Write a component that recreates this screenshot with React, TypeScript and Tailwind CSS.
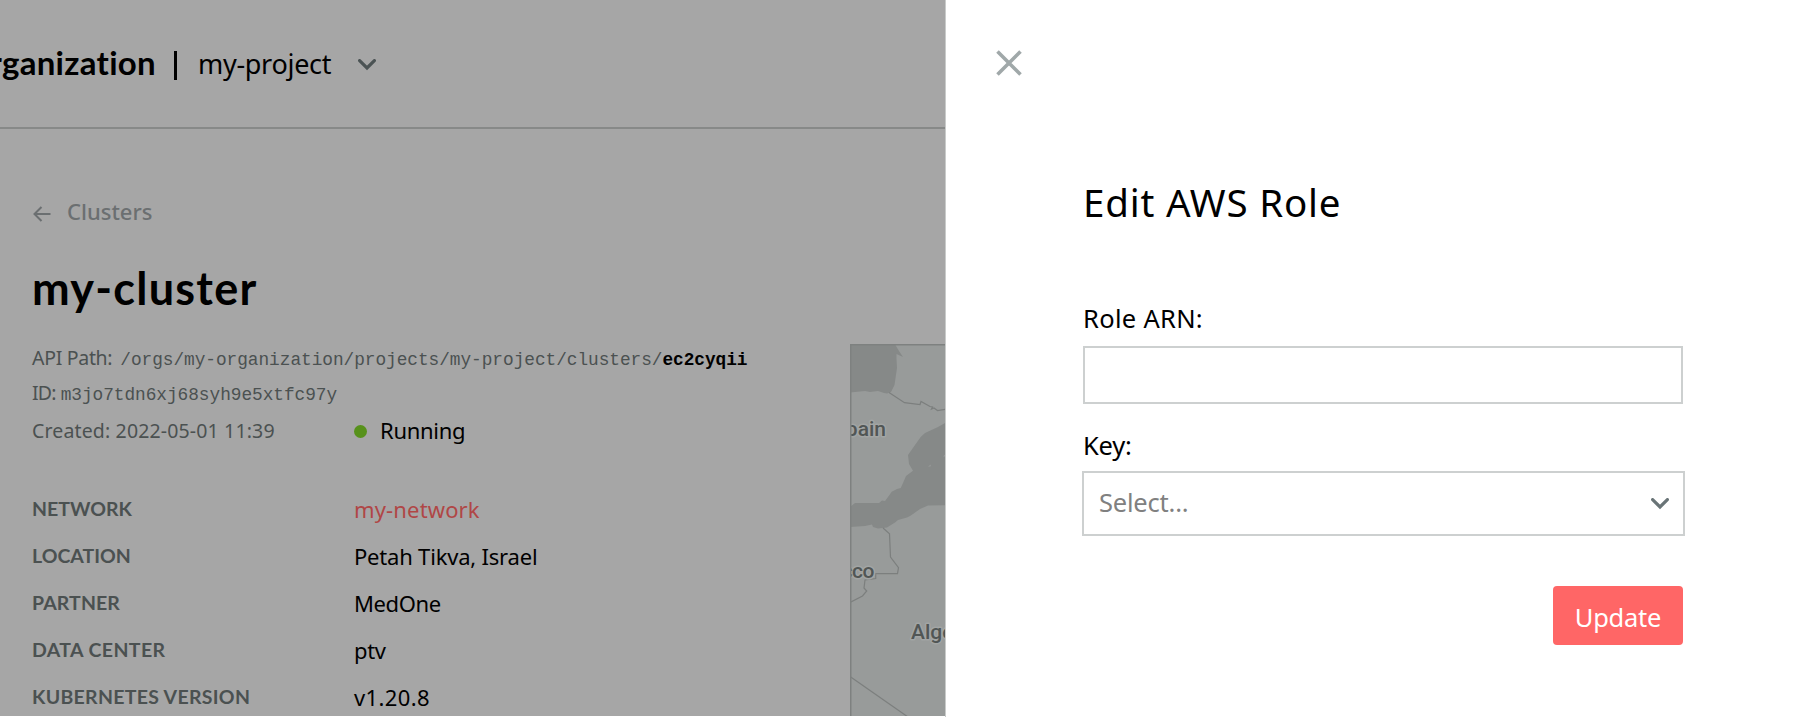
import React from 'react';

const details = [
  { label: 'NETWORK', value: 'my-network', link: true, tracking: 'tracking-normal', valueTracking: 'tracking-[0.15px]' },
  { label: 'LOCATION', value: 'Petah Tikva, Israel', tracking: 'tracking-normal', valueTracking: 'tracking-[-0.2px]' },
  { label: 'PARTNER', value: 'MedOne', tracking: 'tracking-[0.1px]', valueTracking: 'tracking-[-0.4px]' },
  { label: 'DATA CENTER', value: 'ptv', tracking: 'tracking-[0.4px]', valueTracking: 'tracking-[-0.3px]' },
  { label: 'KUBERNETES VERSION', value: 'v1.20.8', tracking: 'tracking-[0.3px]', valueTracking: 'tracking-[0.4px]' },
];

function Chevron({ className }: { className: string }) {
  return (
    <svg width="18" height="12" viewBox="0 0 18 12" fill="none" className={className}>
      <path d="M1.6 1.6 L9 9 L16.4 1.6" stroke="currentColor" strokeWidth="3.2" strokeLinecap="round" />
    </svg>
  );
}

function RegionMap() {
  return (
    <svg width="95" height="373" viewBox="0 0 95 373" className="block shrink-0">
      <rect width="95" height="373" fill="#989b9a" />
      <g fill="#868988">
        <path d="M0 0 H45 L46 2 L49 7 L53 13 L46.5 10 L46.5 15 L47 24 L44.5 41 L41 48 L37 49.5 L34 49 L28 47 L20 48 L15 47 L0 48.5 Z" />
        <path d="M95 79 L88 83 L75 89 L70.7 93 L65 101 L58 111 L59 120 L63 126.7 L56 132 L53 139 L50.7 144 L47 145 L41.7 147.7 L38 153 L35 157 L32 156.5 L29 159 L5 159 L0 163 V183 L15 182 L22 180.5 L23 183 L28 184.5 L37 183.5 L45 178.6 L48 176 L57 173.6 L60 172 L63 170 L70 165 L78 161.6 L95 161.3 Z" />
      </g>
      <path d="M78 122.5 L81 120.5 L80.5 122.5 Z M93 112.5 L95 110.5 V112.5 Z" fill="#989b9a" />
      <g fill="none" stroke="#7c7f7e" strokeWidth="1.2">
        <path d="M39 48.5 L54.5 58.7 L70 60.5 L71 57.5 L80 62.5 L82.5 63 L81.5 65 L84 64 L87.5 66.5 L95 65.3" />
        <path d="M33 184 L39.5 189.7 L40.5 213 L48.5 223.7 L47.5 229.7 H25.7 V234.5 L15 236 L14 244 L16.7 247 L12.5 252 L0 258.5" />
        <path d="M0 332.5 L58 373" />
      </g>
      <g
        fill="#515655"
        stroke="#a2a5a4"
        strokeWidth="3"
        strokeLinejoin="round"
        style={{ paintOrder: 'stroke' }}
        className="font-['Roboto',sans-serif] text-[21px] font-medium"
      >
        <text x="36" y="91.7" textAnchor="end">Spain</text>
        <text x="24" y="233.7" textAnchor="end" className="tracking-[-0.5px]">Morocco</text>
        <text x="61" y="294.7">Algeria</text>
      </g>
      <path d="M0.75 373 V0.75 H95" fill="none" stroke="#7e8180" strokeWidth="1.5" />
    </svg>
  );
}

export default function App() {
  return (
    <div className="flex h-[717px] w-[1820px] overflow-hidden bg-white font-['Noto_Sans',sans-serif] text-black">
      <div className="flex h-[716px] w-[945px] shrink-0 flex-col overflow-hidden bg-[#a6a6a6]">
        <header className="h-[129px] shrink-0 border-b-2 border-[#878988]">
          <div className="flex h-[124px] items-center whitespace-nowrap">
            <div className="flex w-[156px] justify-end overflow-hidden font-['Lato',sans-serif] text-[33px] leading-[60px] font-bold tracking-[0.3px]">
              <span>my-organization</span>
            </div>
            <span className="mt-[7px] ml-[18px] h-[29px] w-[3px] bg-black" />
            <span className="mt-[4px] ml-[21px] text-[27px] tracking-[-0.3px]">my-project</span>
            <Chevron className="mt-[6px] ml-[27px] text-[#4b5354]" />
          </div>
        </header>

        <div className="flex justify-between">
          <main className="w-[760px] pl-[32px] whitespace-nowrap">
            <div className="mt-[66px] flex h-8 items-center text-[22px] font-medium text-[#6b6f71]">
              <svg width="18" height="16" viewBox="0 0 18 16" fill="none" className="mt-[5px] mr-[16px] ml-px">
                <path d="M17.5 8 H2 M8.5 1 L1.5 8 L8.5 15" stroke="currentColor" strokeWidth="2" />
              </svg>
              <span>Clusters</span>
            </div>
            <h1 className="mt-[31px] font-['Lato',sans-serif] text-[45px] leading-[60px] font-bold tracking-[1.25px]">
              my-cluster
            </h1>

            <div className="mt-[23px] text-[19.5px] leading-[34px] text-[#4b5151]">
              <div className="flex h-[34px] items-baseline">
                <span className="tracking-[-0.3px]">API Path:</span>
                <span className="ml-2 font-['Liberation_Mono',monospace] text-[17.8px] tracking-[-0.04px]">
                  /orgs/my-organization/projects/my-project/clusters/
                </span>
                <b className="font-['Liberation_Mono',monospace] text-[17.8px] tracking-[-0.04px] text-black">ec2cyqii</b>
              </div>
              <div className="mt-px flex h-[34px] items-baseline">
                <span className="tracking-[-0.8px]">ID:</span>
                <span className="ml-[5px] font-['Liberation_Mono',monospace] text-[17.8px] tracking-[-0.04px]">
                  m3jo7tdn6xj68syh9e5xtfc97y
                </span>
              </div>
              <div className="mt-[4px] flex h-[34px]">
                <span className="w-[322px] tracking-[0.15px]">Created: 2022-05-01 11:39</span>
                <span className="-mt-px flex h-[34px] items-center text-[22px] tracking-[-0.3px] text-black">
                  <span className="mt-[2px] mr-[13px] size-[13px] rounded-full bg-[#57911b]" />
                  Running
                </span>
              </div>
            </div>

            <dl className="mt-[38px]">
              {details.map((row) => (
                <div key={row.label} className="flex h-[47px] items-center">
                  <dt
                    className={`w-[322px] pb-px font-['Lato',sans-serif] text-[19.5px] font-bold text-[#4b5151] ${row.tracking}`}
                  >
                    {row.label}
                  </dt>
                  <dd className={`text-[22px] ${row.valueTracking} ${row.link ? 'text-[#b04646]' : 'text-black'}`}>
                    {row.value}
                  </dd>
                </div>
              ))}
            </dl>
          </main>
          <aside className="pt-[215px]">
            <RegionMap />
          </aside>
        </div>
      </div>

      <section className="flex-1 border-l border-[#c9cbca] bg-white">
        <button className="mt-[50px] ml-[50px] block" aria-label="Close">
          <svg width="26" height="26" viewBox="0 0 26 26" fill="none">
            <path d="M1.5 1.5 L24.5 24.5 M24.5 1.5 L1.5 24.5" stroke="#a0a8a9" strokeWidth="3.6" />
          </svg>
        </button>
        <form className="mt-[100px] ml-[137px] w-[600px]">
          <h2 className="text-[38.5px] leading-[52px] tracking-[0.8px]">Edit AWS Role</h2>
          <label className="mt-[73px] block text-[25.5px] leading-[34px] tracking-[0.3px]">Role ARN:</label>
          <div className="mt-[11px] h-[58px] border-2 border-[#cdd0d0]" />
          <label className="mt-[24px] block text-[25.5px] leading-[34px] tracking-[-0.2px]">Key:</label>
          <div className="mt-[9px] -mr-[2px] -ml-px flex h-[65px] items-center justify-between border-2 border-[#cdd0d0] pr-[14px] pl-[15px] text-[25.5px] tracking-[-0.2px] text-[#808080]">
            <span className="pb-[2px]">Select...</span>
            <Chevron className="text-[#697477]" />
          </div>
          <div className="mt-[50px] flex justify-end">
            <button
              type="button"
              className="h-[59px] w-[130px] rounded-[4px] bg-[#ff6666] pt-[3px] text-[25.5px] tracking-[-0.25px] text-white"
            >
              Update
            </button>
          </div>
        </form>
      </section>
    </div>
  );
}
